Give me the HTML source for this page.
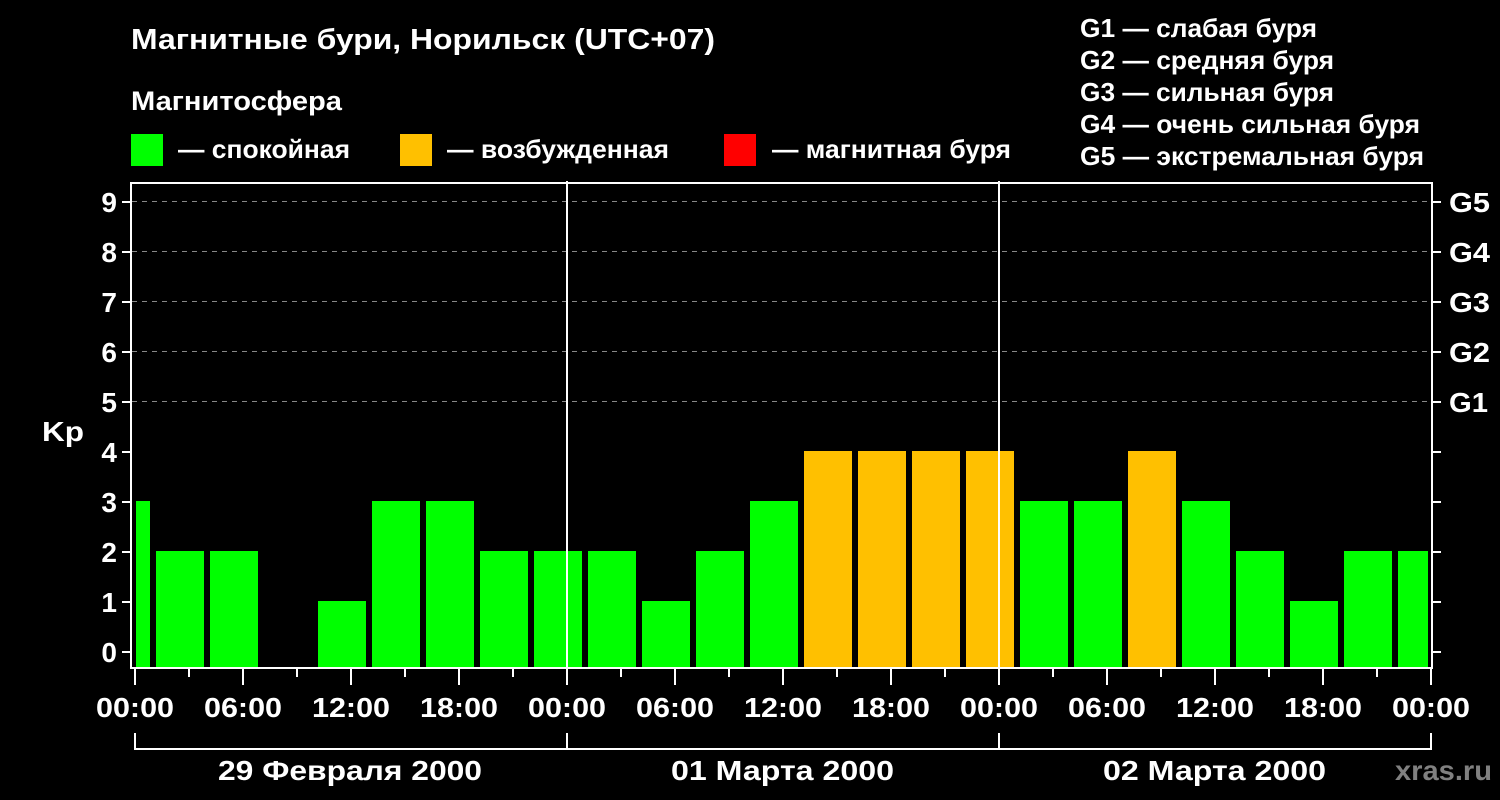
<!DOCTYPE html>
<html><head><meta charset="utf-8"><style>
html,body{margin:0;padding:0;background:#000;}
svg{display:block;font-family:"Liberation Sans",Arial,sans-serif;font-weight:bold;}
</style></head><body>
<svg width="1500" height="800" viewBox="0 0 1500 800" xmlns="http://www.w3.org/2000/svg">
<rect width="1500" height="800" fill="#000"/>
<g fill="#fff" font-size="26" lengthAdjust="spacingAndGlyphs">
<text x="131" y="49" font-size="29" textLength="584" lengthAdjust="spacingAndGlyphs">Магнитные бури, Норильск (UTC+07)</text>
<text x="131" y="110" font-size="27" textLength="211" lengthAdjust="spacingAndGlyphs">Магнитосфера</text>
<text x="178" y="158" textLength="172" lengthAdjust="spacingAndGlyphs">— спокойная</text>
<text x="447" y="158" textLength="222" lengthAdjust="spacingAndGlyphs">— возбужденная</text>
<text x="772" y="158" textLength="239" lengthAdjust="spacingAndGlyphs">— магнитная буря</text>
<text x="1080" y="37" textLength="237" lengthAdjust="spacingAndGlyphs">G1 — слабая буря</text>
<text x="1080" y="69" textLength="254" lengthAdjust="spacingAndGlyphs">G2 — средняя буря</text>
<text x="1080" y="101" textLength="254" lengthAdjust="spacingAndGlyphs">G3 — сильная буря</text>
<text x="1080" y="133" textLength="340" lengthAdjust="spacingAndGlyphs">G4 — очень сильная буря</text>
<text x="1080" y="165" textLength="344" lengthAdjust="spacingAndGlyphs">G5 — экстремальная буря</text>
</g>
<rect x="131" y="134" width="32" height="32" fill="#00ff00"/>
<rect x="400" y="134" width="32" height="32" fill="#ffc000"/>
<rect x="724" y="134" width="32" height="32" fill="#ff0000"/>

<g stroke="#888" stroke-width="1" stroke-dasharray="5,5">
<line x1="132" y1="201.5" x2="1431" y2="201.5"/>
<line x1="132" y1="251.5" x2="1431" y2="251.5"/>
<line x1="132" y1="301.5" x2="1431" y2="301.5"/>
<line x1="132" y1="351.5" x2="1431" y2="351.5"/>
<line x1="132" y1="401.5" x2="1431" y2="401.5"/>
</g>

<g fill="#00ff00">
<rect x="136" y="501" width="14" height="166"/>
<rect x="156" y="551" width="48" height="116"/>
<rect x="210" y="551" width="48" height="116"/>
<rect x="318" y="601" width="48" height="66"/>
<rect x="372" y="501" width="48" height="166"/>
<rect x="426" y="501" width="48" height="166"/>
<rect x="480" y="551" width="48" height="116"/>
<rect x="534" y="551" width="48" height="116"/>
<rect x="588" y="551" width="48" height="116"/>
<rect x="642" y="601" width="48" height="66"/>
<rect x="696" y="551" width="48" height="116"/>
<rect x="750" y="501" width="48" height="166"/>
<rect x="1020" y="501" width="48" height="166"/>
<rect x="1074" y="501" width="48" height="166"/>
<rect x="1182" y="501" width="48" height="166"/>
<rect x="1236" y="551" width="48" height="116"/>
<rect x="1290" y="601" width="48" height="66"/>
<rect x="1344" y="551" width="48" height="116"/>
<rect x="1398" y="551" width="30" height="116"/>
</g>
<g fill="#ffc000">
<rect x="804" y="451" width="48" height="216"/>
<rect x="858" y="451" width="48" height="216"/>
<rect x="912" y="451" width="48" height="216"/>
<rect x="966" y="451" width="48" height="216"/>
<rect x="1128" y="451" width="48" height="216"/>
</g>

<g stroke="#fff" stroke-width="2" fill="none">
<rect x="131" y="183" width="1301" height="485"/>
<line x1="567" y1="181" x2="567" y2="668"/>
<line x1="999" y1="181" x2="999" y2="668"/>
<path d="M122 202H131M122 252H131M122 302H131M122 352H131M122 402H131M122 452H131M122 502H131M122 552H131M122 602H131M122 652H131"/>
<path d="M1432 202H1441M1432 252H1441M1432 302H1441M1432 352H1441M1432 402H1441M1432 452H1441M1432 502H1441M1432 552H1441M1432 602H1441M1432 652H1441"/>
<path d="M135 668V685M243 668V685M351 668V685M459 668V685M567 668V685M675 668V685M783 668V685M891 668V685M999 668V685M1107 668V685M1215 668V685M1323 668V685M1431 668V685"/>
<path d="M189 668V677M297 668V677M405 668V677M513 668V677M621 668V677M729 668V677M837 668V677M945 668V677M1053 668V677M1161 668V677M1269 668V677M1377 668V677"/>
<path d="M135 733V749H1431V733M567 733V749M999 733V749"/>
</g>

<g fill="#fff" font-size="28" text-anchor="end">
<text x="117" y="212">9</text>
<text x="117" y="262">8</text>
<text x="117" y="312">7</text>
<text x="117" y="362">6</text>
<text x="117" y="412">5</text>
<text x="117" y="462">4</text>
<text x="117" y="512">3</text>
<text x="117" y="562">2</text>
<text x="117" y="612">1</text>
<text x="117" y="662">0</text>
</g>
<text x="42" y="441" fill="#fff" font-size="28" textLength="42" lengthAdjust="spacingAndGlyphs">Kp</text>
<g fill="#fff" font-size="28">
<text x="1449" y="212" textLength="41" lengthAdjust="spacingAndGlyphs">G5</text>
<text x="1449" y="262" textLength="41" lengthAdjust="spacingAndGlyphs">G4</text>
<text x="1449" y="312" textLength="41" lengthAdjust="spacingAndGlyphs">G3</text>
<text x="1449" y="362" textLength="41" lengthAdjust="spacingAndGlyphs">G2</text>
<text x="1449" y="412" textLength="39" lengthAdjust="spacingAndGlyphs">G1</text>
</g>
<g fill="#fff" font-size="28">
<text x="96" y="717" textLength="78" lengthAdjust="spacingAndGlyphs">00:00</text>
<text x="204" y="717" textLength="78" lengthAdjust="spacingAndGlyphs">06:00</text>
<text x="312" y="717" textLength="78" lengthAdjust="spacingAndGlyphs">12:00</text>
<text x="420" y="717" textLength="78" lengthAdjust="spacingAndGlyphs">18:00</text>
<text x="528" y="717" textLength="78" lengthAdjust="spacingAndGlyphs">00:00</text>
<text x="636" y="717" textLength="78" lengthAdjust="spacingAndGlyphs">06:00</text>
<text x="744" y="717" textLength="78" lengthAdjust="spacingAndGlyphs">12:00</text>
<text x="852" y="717" textLength="78" lengthAdjust="spacingAndGlyphs">18:00</text>
<text x="960" y="717" textLength="78" lengthAdjust="spacingAndGlyphs">00:00</text>
<text x="1068" y="717" textLength="78" lengthAdjust="spacingAndGlyphs">06:00</text>
<text x="1176" y="717" textLength="78" lengthAdjust="spacingAndGlyphs">12:00</text>
<text x="1284" y="717" textLength="78" lengthAdjust="spacingAndGlyphs">18:00</text>
<text x="1392" y="717" textLength="78" lengthAdjust="spacingAndGlyphs">00:00</text>
<text x="218" y="780" textLength="264" lengthAdjust="spacingAndGlyphs">29 Февраля 2000</text>
<text x="671" y="780" textLength="223" lengthAdjust="spacingAndGlyphs">01 Марта 2000</text>
<text x="1103" y="780" textLength="223" lengthAdjust="spacingAndGlyphs">02 Марта 2000</text>
</g>
<text x="1395" y="780" fill="#808080" font-size="28" textLength="97" lengthAdjust="spacingAndGlyphs">xras.ru</text>
</svg>
</body></html>
